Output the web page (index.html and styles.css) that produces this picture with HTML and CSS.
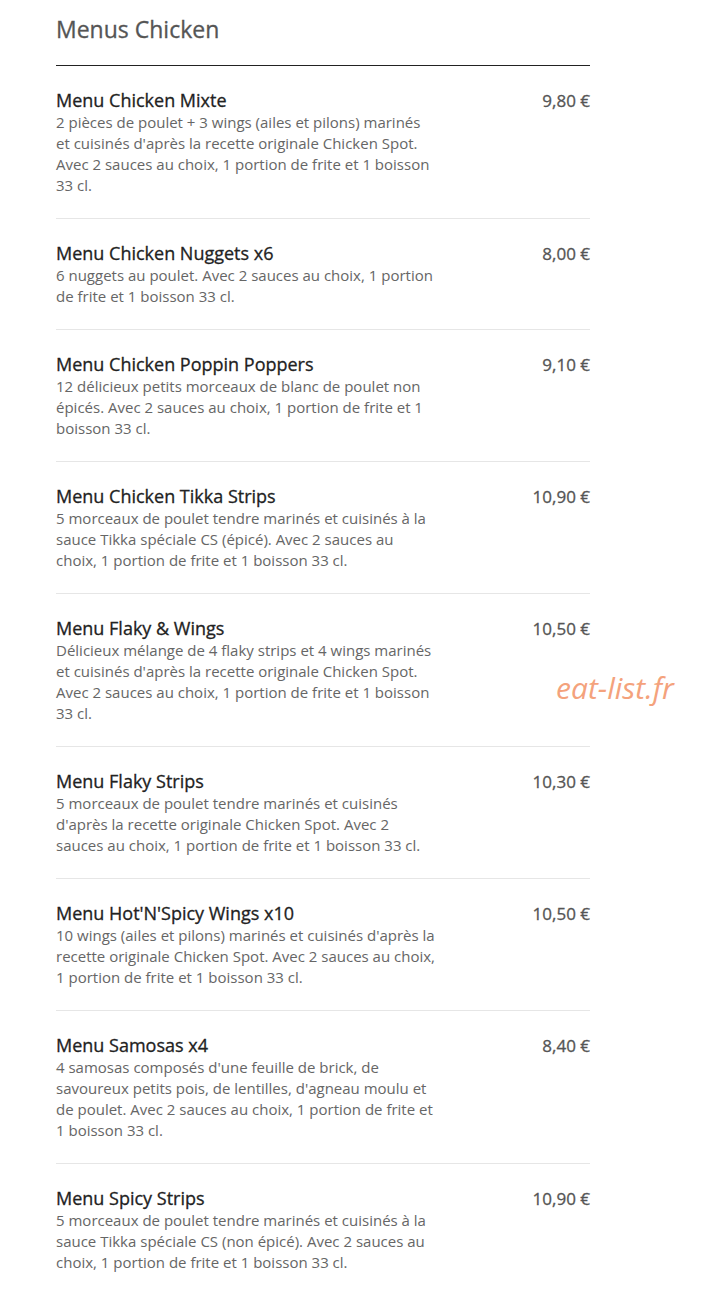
FILE: index.html
```html
<!DOCTYPE html>
<html lang="fr">
<head>
  <meta charset="UTF-8">
  <meta name="viewport" content="width=device-width, initial-scale=1.0">
  <title>Menus Chicken</title>
  <link rel="stylesheet" href="styles.css">
</head>
<body>
  <div class="menu">
    <h2 class="menu-title">Menus Chicken</h2>

    <div class="item">
      <div class="item-text">
        <h3 class="item-name">Menu Chicken Mixte</h3>
        <p class="item-desc">2 pièces de poulet + 3 wings (ailes et pilons) marinés et cuisinés d'après la recette originale Chicken Spot. Avec 2 sauces au choix, 1 portion de frite et 1 boisson 33 cl.</p>
      </div>
      <div class="item-price">9,80 €</div>
    </div>

    <div class="item">
      <div class="item-text">
        <h3 class="item-name">Menu Chicken Nuggets x6</h3>
        <p class="item-desc">6 nuggets au poulet. Avec 2 sauces au choix, 1 portion de frite et 1 boisson 33 cl.</p>
      </div>
      <div class="item-price">8,00 €</div>
    </div>

    <div class="item">
      <div class="item-text">
        <h3 class="item-name">Menu Chicken Poppin Poppers</h3>
        <p class="item-desc">12 délicieux petits morceaux de blanc de poulet non épicés. Avec 2 sauces au choix, 1 portion de frite et 1 boisson 33 cl.</p>
      </div>
      <div class="item-price">9,10 €</div>
    </div>

    <div class="item">
      <div class="item-text">
        <h3 class="item-name">Menu Chicken Tikka Strips</h3>
        <p class="item-desc">5 morceaux de poulet tendre marinés et cuisinés à la sauce Tikka spéciale CS (épicé). Avec 2 sauces au choix, 1 portion de frite et 1 boisson 33 cl.</p>
      </div>
      <div class="item-price">10,90 €</div>
    </div>

    <div class="item">
      <div class="item-text">
        <h3 class="item-name">Menu Flaky &amp; Wings</h3>
        <p class="item-desc">Délicieux mélange de 4 flaky strips et 4 wings marinés et cuisinés d'après la recette originale Chicken Spot. Avec 2 sauces au choix, 1 portion de frite et 1 boisson 33 cl.</p>
      </div>
      <div class="item-price">10,50 €</div>
    </div>

    <div class="item">
      <div class="item-text">
        <h3 class="item-name">Menu Flaky Strips</h3>
        <p class="item-desc">5 morceaux de poulet tendre marinés et cuisinés d'après la recette originale Chicken Spot. Avec 2 sauces au choix, 1 portion de frite et 1 boisson 33 cl.</p>
      </div>
      <div class="item-price">10,30 €</div>
    </div>

    <div class="item">
      <div class="item-text">
        <h3 class="item-name">Menu Hot'N'Spicy Wings x10</h3>
        <p class="item-desc">10 wings (ailes et pilons) marinés et cuisinés d'après la recette originale Chicken Spot. Avec 2 sauces au choix, 1 portion de frite et 1 boisson 33 cl.</p>
      </div>
      <div class="item-price">10,50 €</div>
    </div>

    <div class="item">
      <div class="item-text">
        <h3 class="item-name">Menu Samosas x4</h3>
        <p class="item-desc">4 samosas composés d'une feuille de brick, de savoureux petits pois, de lentilles, d'agneau moulu et de poulet. Avec 2 sauces au choix, 1 portion de frite et 1 boisson 33 cl.</p>
      </div>
      <div class="item-price">8,40 €</div>
    </div>

    <div class="item">
      <div class="item-text">
        <h3 class="item-name">Menu Spicy Strips</h3>
        <p class="item-desc">5 morceaux de poulet tendre marinés et cuisinés à la sauce Tikka spéciale CS (non épicé). Avec 2 sauces au choix, 1 portion de frite et 1 boisson 33 cl.</p>
      </div>
      <div class="item-price">10,90 €</div>
    </div>
  </div>

  <!-- Watermark -->
  <div class="watermark">eat-list.fr</div>
</body>
</html>
```

FILE: styles.css
```css
/* General */
body {
  margin: 0;
  padding: 0 0 0 56px;
  font-family: 'Open Sans', sans-serif;
  background: #fff;
  color: #333;
  position: relative;
}

.menu {
  width: 534px;
}

/* Section title */
.menu-title {
  margin: 0;
  padding: 14px 0 21px;
  font-size: 23px;
  font-weight: 500;
  line-height: 30px;
  color: #555;
  -webkit-text-stroke: 0.3px #555;
  border-bottom: 1px solid #222;
}

/* Items */
.item {
  display: flex;
  justify-content: space-between;
  align-items: flex-start;
  padding: 23px 0 22px;
  border-bottom: 1px solid #e6e6e6;
}

.item:last-child {
  border-bottom: none;
}

.item-text {
  width: 380px;
}

.item-name {
  margin: 0;
  font-size: 18px;
  font-weight: 500;
  line-height: 23px;
  color: #222;
  -webkit-text-stroke: 0.3px #222;
}

.item-desc {
  margin: 0;
  font-size: 15px;
  line-height: 21px;
  color: #666;
}

.item-price {
  font-size: 17px;
  font-weight: 500;
  line-height: 23px;
  color: #555;
  -webkit-text-stroke: 0.3px #555;
}

/* Watermark */
.watermark {
  position: absolute;
  top: 667px;
  left: 556px;
  font-size: 30px;
  font-style: italic;
  color: #f4a27c;
}
```
